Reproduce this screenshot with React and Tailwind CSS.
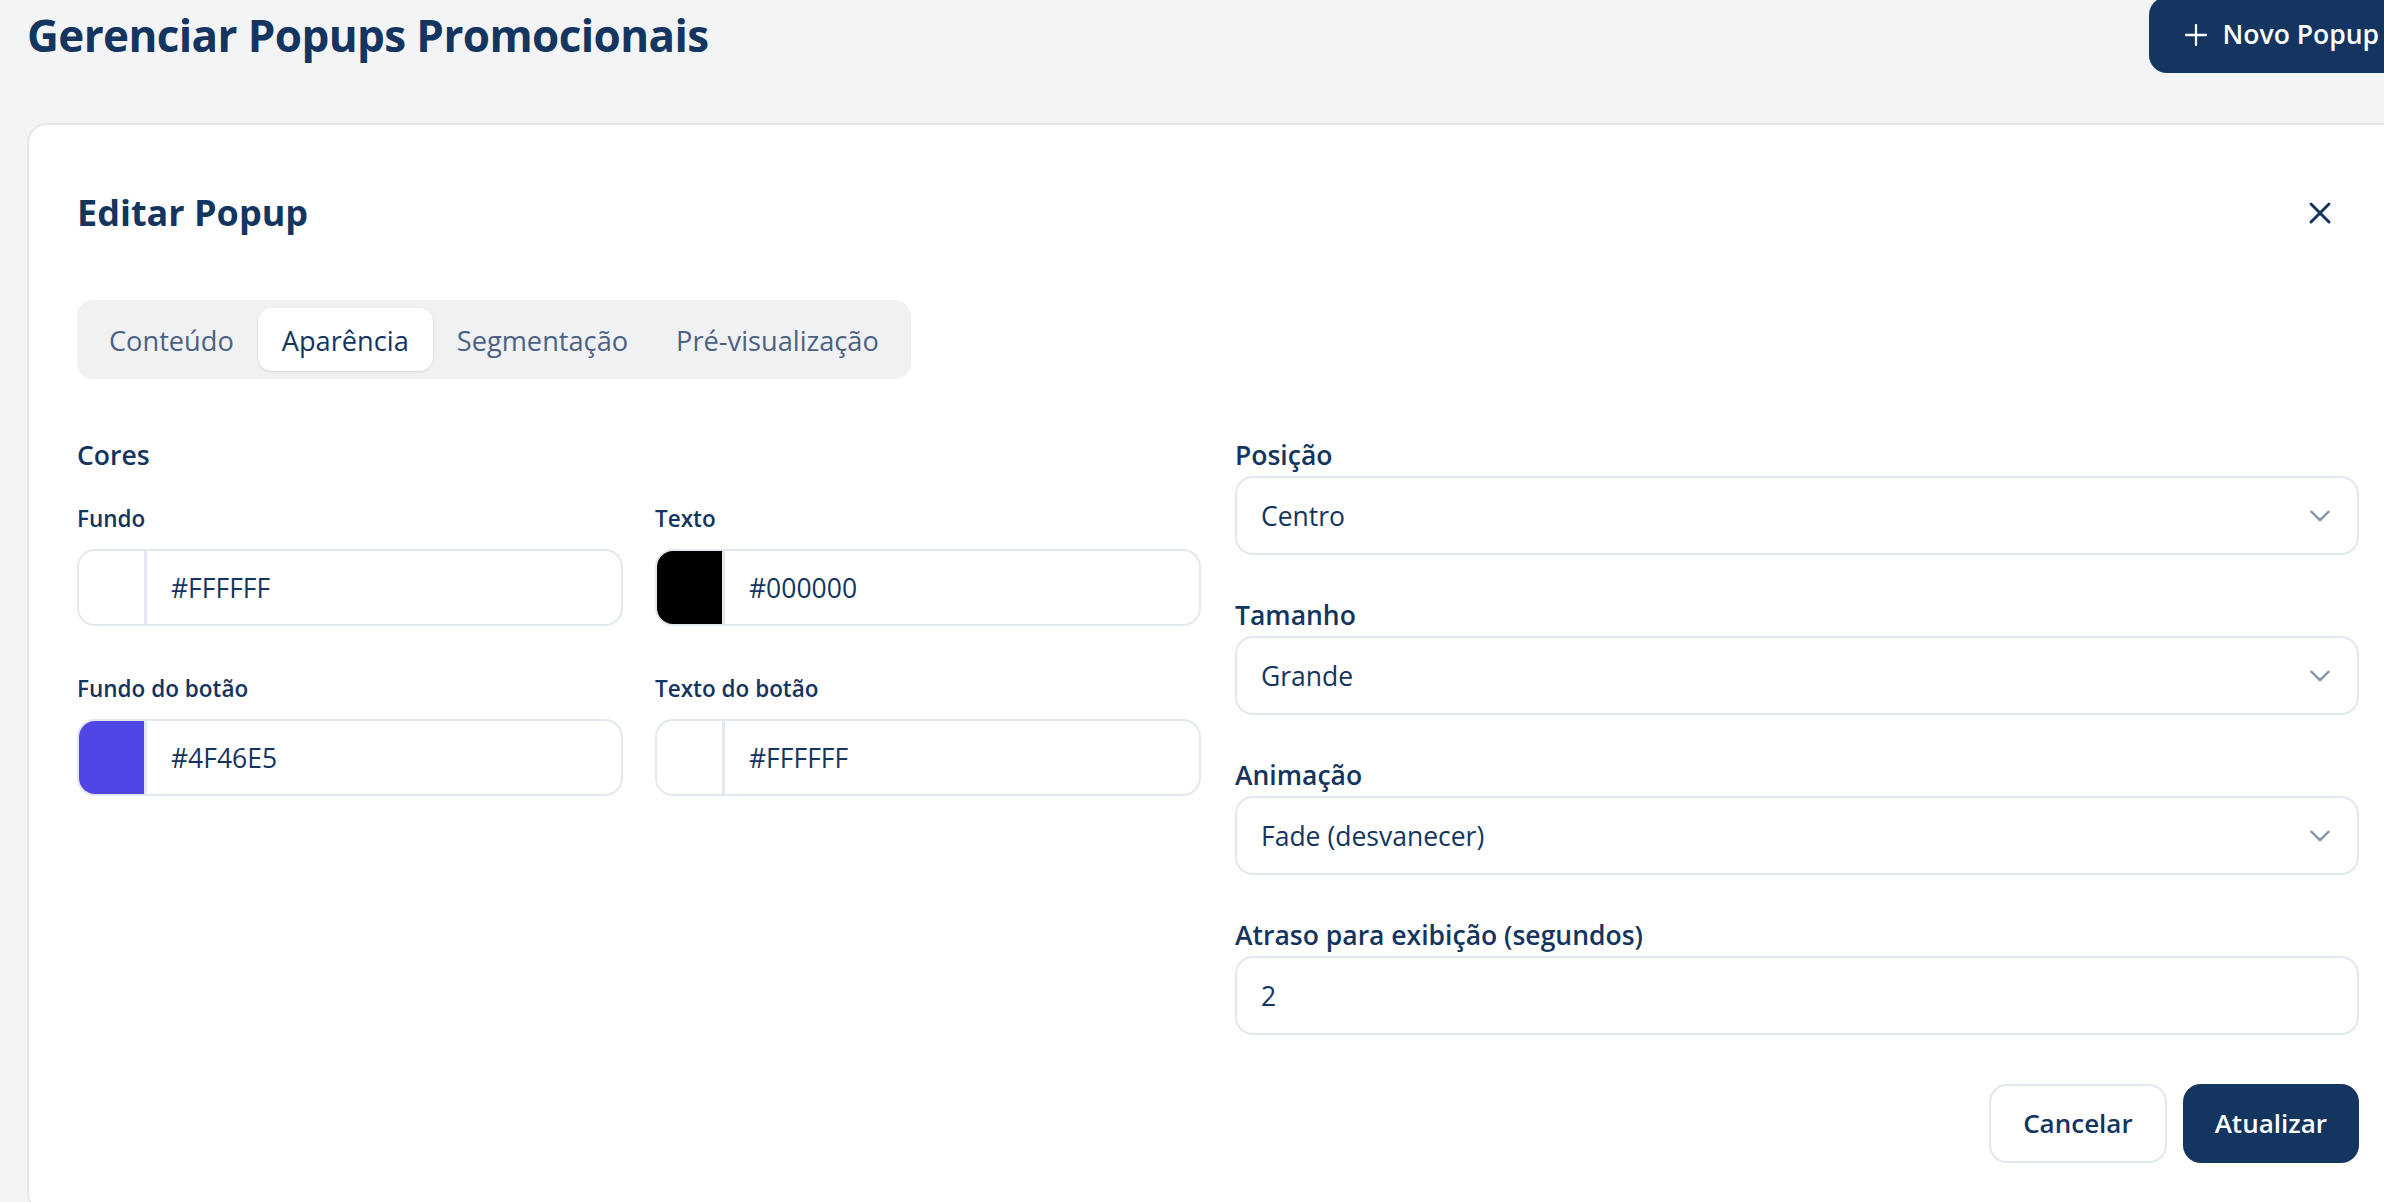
import { Plus, X, ChevronDown } from 'lucide-react';

const navy = 'text-[#13355f]';

function ColorField({ label, swatch, value }) {
    return (
        <div>
            <label className={`block text-[22.5px] leading-[30px] font-semibold ${navy} mb-[15px]`}>{label}</label>
            <div className="flex h-[77px] rounded-[18px] border-2 border-[#e2e8f0] bg-white overflow-hidden">
                <div className={`w-[68px] shrink-0 border-r-[3px] border-[#e2e8f0] ${swatch}`} />
                <div className={`flex items-center pl-[24px] pt-[3px] text-[26.5px] ${navy}`}>{value}</div>
            </div>
        </div>
    );
}

function SelectField({ label, value, select = true }) {
    return (
        <div>
            <label className={`block text-[26.5px] leading-[36px] font-semibold ${navy} mb-[3px]`}>{label}</label>
            <div className="flex items-center justify-between h-[79px] rounded-[18px] border-2 border-[#e2e8f0] bg-white pl-[24px] pr-[20px]">
                <span className={`pt-[2px] text-[26.5px] ${navy}`}>{value}</span>
                {select && <ChevronDown size={34} strokeWidth={1.7} className="text-[#7d8da6]" />}
            </div>
        </div>
    );
}

export default function App() {
    const tabs = ['Conteúdo', 'Aparência', 'Segmentação', 'Pré-visualização'];

    return (
        <div className="h-screen w-full overflow-hidden bg-[#f3f4f6]" style={{ fontFamily: '"Open Sans", sans-serif' }}>
            <div className="w-[2436px] px-[27px]">
                <div className="flex items-center justify-between h-[76px] -mt-[3px]">
                    <h1 className={`text-[44px] font-bold ${navy} tracking-[-0.6px]`}>Gerenciar Popups Promocionais</h1>
                    <button className="flex items-center gap-[10px] h-[76px] px-[30px] rounded-[18px] bg-[#13355f] text-white text-[26.5px] font-semibold">
                        <Plus size={34} strokeWidth={1.6} />
                        Novo Popup
                    </button>
                </div>

                <div className="mt-[50px] rounded-[20px] border-2 border-[#e5e7eb] bg-white px-[48px] pt-[64px] pb-[48px]">
                    <div className="flex items-center justify-between h-[48px]">
                        <h2 className={`text-[36px] font-bold ${navy}`}>Editar Popup</h2>
                        <X size={36} strokeWidth={2} className={`${navy} mr-[21px]`} />
                    </div>

                    <div className="mt-[63px] inline-flex items-center p-[8px] rounded-[16px] bg-[#f0f1f3]">
                        {tabs.map((t) => (
                            <div
                                key={t}
                                className={`h-[63px] flex items-center px-[24px] pt-[3px] rounded-[14px] text-[27.2px] font-medium ${
                                    t === 'Aparência' ? 'bg-white shadow-sm text-[#13355f]' : 'text-[#4b6283]'
                                }`}
                            >
                                {t}
                            </div>
                        ))}
                    </div>

                    <div className="mt-[58px] grid grid-cols-2 gap-[34px]">
                        <div>
                            <h3 className={`text-[26.5px] leading-[36px] font-semibold ${navy}`}>Cores</h3>
                            <div className="mt-[31px] grid grid-cols-2 gap-x-[32px] gap-y-[48px]">
                                <ColorField label="Fundo" swatch="bg-white" value="#FFFFFF" />
                                <ColorField label="Texto" swatch="bg-black" value="#000000" />
                                <ColorField label="Fundo do botão" swatch="bg-[#4f46e5]" value="#4F46E5" />
                                <ColorField label="Texto do botão" swatch="bg-white" value="#FFFFFF" />
                            </div>
                        </div>

                        <div className="flex flex-col gap-[42px]">
                            <SelectField label="Posição" value="Centro" />
                            <SelectField label="Tamanho" value="Grande" />
                            <SelectField label="Animação" value="Fade (desvanecer)" />
                            <SelectField label="Atraso para exibição (segundos)" value="2" select={false} />
                        </div>
                    </div>

                    <div className="mt-[49px] flex justify-end gap-[16px]">
                        <button className={`h-[79px] px-[32px] rounded-[18px] border-2 border-[#e2e8f0] bg-white text-[26px] font-semibold ${navy}`}>
                            Cancelar
                        </button>
                        <button className="h-[79px] px-[32px] rounded-[18px] bg-[#13355f] text-white text-[26px] font-semibold">
                            Atualizar
                        </button>
                    </div>
                </div>
            </div>
        </div>
    );
}
